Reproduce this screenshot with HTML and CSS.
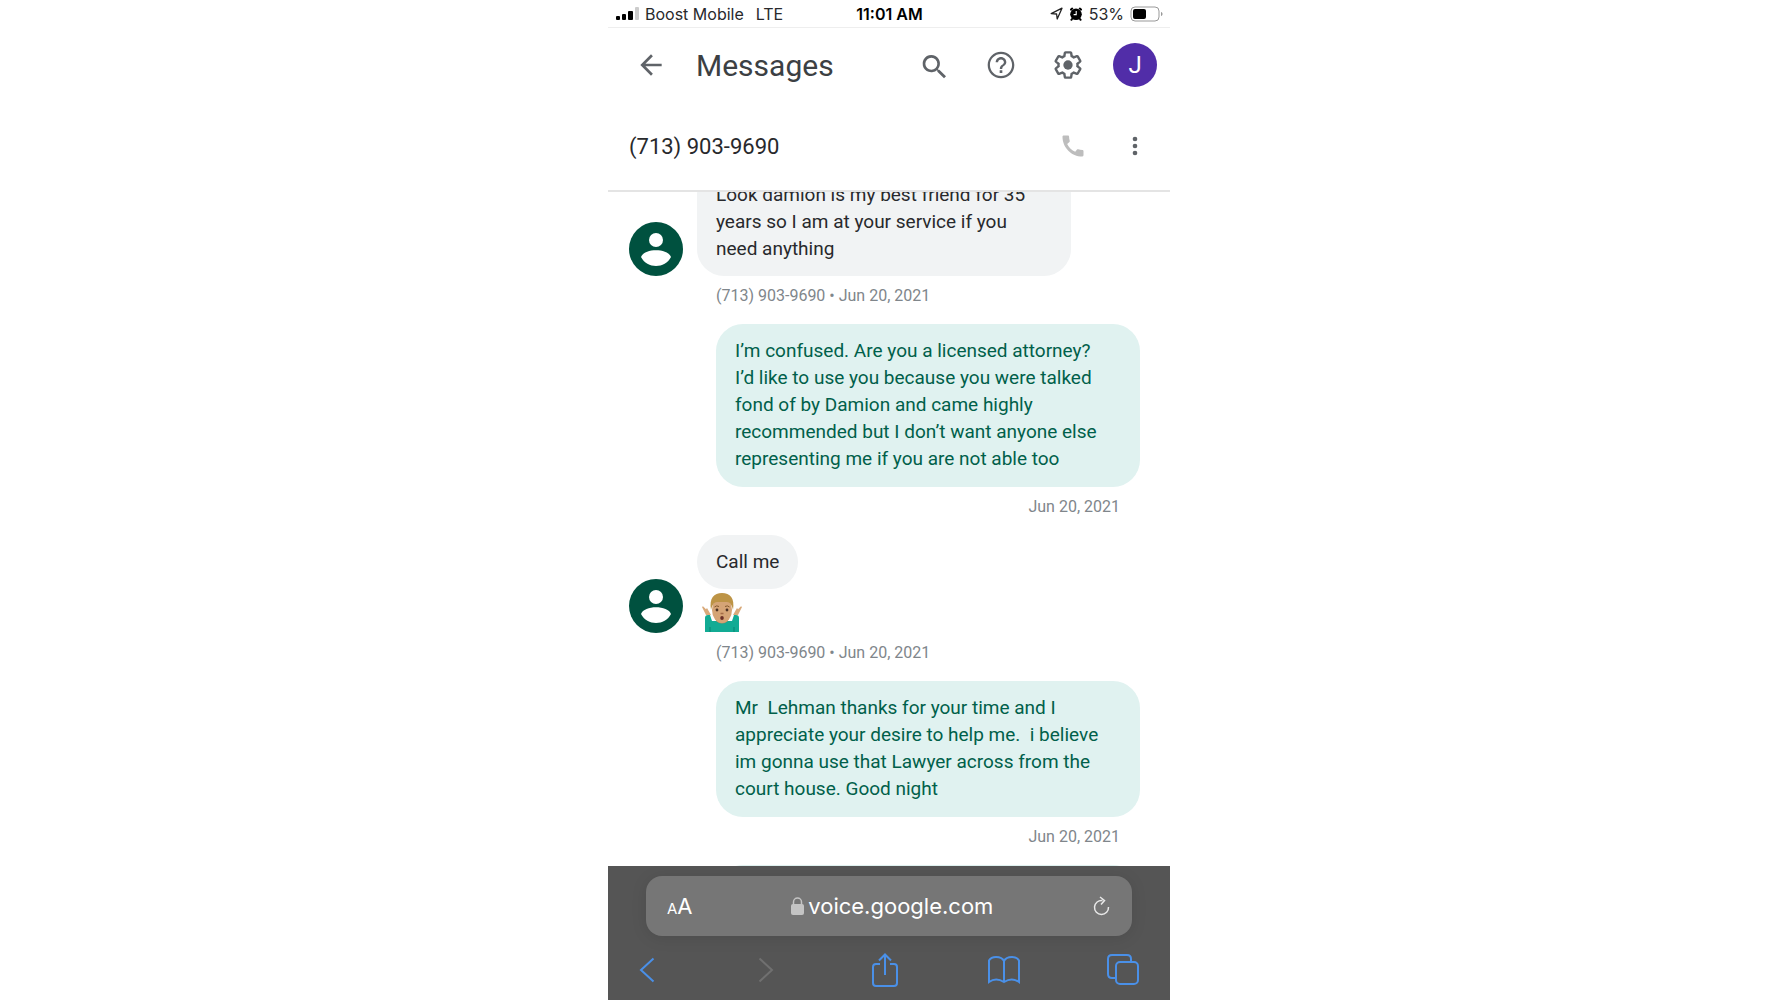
FILE: index.html
```html
<!DOCTYPE html>
<html lang="en">
<head>
    <meta charset="UTF-8">
    <meta name="viewport" content="width=device-width, initial-scale=1.0">
    <title>Messages</title>
    <link rel="stylesheet" href="styles.css">
</head>
<body>
    <div class="phone">
        <!-- Status bar -->
        <div class="status">
            <div class="status-left">
                <svg width="23" height="14" viewBox="0 0 23 14">
                    <rect x="0" y="9" width="4" height="4" rx="1"/>
                    <rect x="6" y="7" width="4" height="6" rx="1"/>
                    <rect x="12" y="4" width="5" height="9" rx="1"/>
                    <rect x="19" y="0" width="4" height="13" rx="1" fill="#ccc"/>
                </svg>
                <span>Boost Mobile</span>
                <span class="network">LTE</span>
            </div>
            <div class="status-time">11:01 AM</div>
            <div class="status-right">
                <svg width="13" height="13" viewBox="0 0 13 13">
                    <path d="M1.2 6.6 12 1.2 7.2 12 6.6 7z" fill="none" stroke="#222" stroke-width="1.3" stroke-linejoin="round"/>
                </svg>
                <svg class="alarm" width="14" height="14" viewBox="0 0 14 14">
                    <circle cx="7" cy="7.3" r="5.8"/>
                    <path d="M2 2.600 3.200 1.600M12 2.600l-1.200-1M3 12l-.6.8M11 12l.6.8" stroke="#000" stroke-width="2" stroke-linecap="round"/>
                    <path d="M7.2 4v3.6H4.6" fill="none" stroke="#fff" stroke-width="1.1"/>
                </svg>
                <span>53%</span>
                <svg width="33" height="16" viewBox="0 0 33 16">
                    <rect x="1" y="1" width="28" height="14" rx="4" fill="#fff" stroke="#999"/>
                    <rect x="3" y="3" width="13" height="10" rx="2"/>
                    <path d="M31 6c2 .5 2 3.500 0 4z" fill="#999"/>
                </svg>
            </div>
        </div>

        <!-- App header -->
        <header class="header">
            <button type="button" class="icon-btn" aria-label="Back">
                <svg width="32" height="32" viewBox="0 0 24 24"><path d="M20 11H7.830l5.590-5.590L12 4l-8 8 8 8 1.410-1.410L7.830 13H20z"/></svg>
            </button>
            <h1>Messages</h1>
            <button type="button" class="icon-btn" aria-label="Search">
                <svg width="32" height="32" viewBox="0 0 24 24"><path d="M16 15.500h-.8l-.3-.3A6.500 6.500 0 1 0 14.200 15.900l.3.300v.8l5 5 1.500-1.500zm-6 0a4.500 4.500 0 1 1 0-9 4.500 4.500 0 0 1 0 9z"/></svg>
            </button>
            <button type="button" class="icon-btn" aria-label="Help">
                <svg width="32" height="32" viewBox="0 0 24 24"><path d="M11 18h2v-2h-2zm1-16C6.480 2 2 6.480 2 12s4.480 10 10 10 10-4.480 10-10S17.520 2 12 2zm0 18.300c-4.600 0-8.300-3.700-8.300-8.300S7.400 3.700 12 3.700s8.300 3.700 8.300 8.300-3.700 8.300-8.300 8.300zM12 6c-2.210 0-4 1.790-4 4h1.800c0-1.200 1-2.200 2.200-2.200s2.200 1 2.200 2.200c0 2-3.100 1.750-3.100 5h1.800c0-2.250 3.100-2.500 3.100-5 0-2.210-1.790-4-4-4z"/></svg>
            </button>
            <button type="button" class="icon-btn" aria-label="Settings">
                <svg width="32" height="32" viewBox="0 0 24 24">
                    <path transform="translate(.6 .6) scale(.95)" fill="none" stroke="#5f6368" stroke-width="1.900" d="M19.430 12.980c.04-.32.07-.64.07-.98 0-.34-.03-.66-.07-.98l2.110-1.650c.19-.15.24-.42.12-.64l-2-3.460c-.09-.16-.26-.25-.44-.25-.06 0-.12.010-.17.030l-2.490 1c-.52-.4-1.080-.73-1.690-.98l-.38-2.650C14.460 2.180 14.250 2 14 2h-4c-.25 0-.46.18-.49.42l-.38 2.650c-.61.25-1.170.59-1.690.98l-2.490-1c-.06-.02-.12-.03-.18-.03-.17 0-.34.09-.43.25l-2 3.460c-.13.22-.07.49.12.64l2.110 1.650c-.04.32-.07.65-.07.98 0 .33.03.66.07.98l-2.110 1.650c-.19.15-.24.42-.12.64l2 3.460c.09.16.26.25.44.25.06 0 .12-.01.17-.03l2.490-1c.52.4 1.080.73 1.690.98l.38 2.650c.03.24.24.42.49.42h4c.25 0 .46-.18.49-.42l.38-2.650c.61-.25 1.170-.59 1.690-.98l2.490 1c.06.02.12.03.18.03.17 0 .34-.09.43-.25l2-3.460c.12-.22.07-.49-.12-.64z"/>
                    <circle cx="12" cy="12" r="3.500"/>
                </svg>
            </button>
            <button type="button" class="account" aria-label="Account">J</button>
        </header>

        <div class="contact">
            <h2>(713) 903-9690</h2>
            <button type="button" class="icon-btn call" aria-label="Call">
                <svg width="28" height="28" viewBox="0 0 24 24"><path d="M20.010 15.380c-1.230 0-2.420-.2-3.530-.56-.35-.12-.74-.03-1.010.24l-1.570 1.970c-2.830-1.350-5.480-3.900-6.890-6.830l1.950-1.660c.27-.28.35-.67.24-1.020-.37-1.110-.56-2.300-.56-3.530 0-.54-.45-.99-.99-.99H4.190C3.650 3 3 3.240 3 3.990 3 13.280 10.730 21 20.010 21c.71 0 .99-.63.99-1.180v-3.450c0-.54-.45-.99-.99-.99z"/></svg>
            </button>
            <button type="button" class="icon-btn" aria-label="More options">
                <svg width="28" height="28" viewBox="0 0 24 24"><circle cx="12" cy="6" r="2"/><circle cx="12" cy="12" r="2"/><circle cx="12" cy="18" r="2"/></svg>
            </button>
        </div>

        <!-- Conversation -->
        <main class="thread">
            <div class="row first">
                <svg class="avatar" viewBox="0 0 54 54">
                    <circle cx="27" cy="27" r="27" fill="#00513f"/>
                    <circle cx="27" cy="18" r="7" fill="#fff"/>
                    <path d="M12 35c3-9 27-9 30 0-6 12-24 12-30 0z" fill="#fff"/>
                </svg>
                <div class="bubbles">
                    <div class="bubble">Look damion is my best friend for 35 years so I am at your service if you need anything</div>
                </div>
            </div>
            <div class="meta">(713) 903-9690 • Jun 20, 2021</div>

            <div class="bubble sent">I’m confused. Are you a licensed attorney? I’d like to use you because you were talked fond of by Damion and came highly recommended but I don’t want anyone else representing me if you are not able too</div>
            <div class="meta meta-sent">Jun 20, 2021</div>

            <div class="row">
                <svg class="avatar" viewBox="0 0 54 54">
                    <circle cx="27" cy="27" r="27" fill="#00513f"/>
                    <circle cx="27" cy="18" r="7" fill="#fff"/>
                    <path d="M12 35c3-9 27-9 30 0-6 12-24 12-30 0z" fill="#fff"/>
                </svg>
                <div class="bubbles">
                    <div class="bubble">Call me</div>
                    <svg class="shrug" width="40" height="40" viewBox="0 0 40 40" role="img" aria-label="Man shrugging">
                        <path d="M3 39V25q0-3 3-3h2l2 6 5 0h10l5 0 2-6h2q3 0 3 3v14z" fill="#12ab94"/>
                        <path d="M8 39v-5M32 39v-5" stroke="#078571"/>
                        <path d="M4 22 0 14l1-.8 3 3 1-1.200 4 7zM36 22l4-8-1-.8-3 3-1-1.200-4 7z" fill="#d9aa7b"/>
                        <path d="M14 26h12v2q-6 5-12 0z" fill="#b88b5e"/>
                        <ellipse cx="20" cy="17" rx="10" ry="13" fill="#d5a476"/>
                        <path d="M9 17C7 5 12 0 20 0s13 5 11 17c-1-5-3-8-6-8H15c-3 0-5 3-6 8z" fill="#bd9446"/>
                        <path d="M12.500 14q2-2 4.500-.5M23 13.500q2.500-1.500 4.500.5" fill="none" stroke="#83582c"/>
                        <circle cx="15" cy="17" r="1.400" fill="#4c3124"/>
                        <circle cx="25" cy="17" r="1.400" fill="#4c3124"/>
                        <path d="M18.500 20.500h3" stroke="#a46d48" stroke-width="1.500"/>
                        <ellipse cx="20" cy="25" rx="1.800" ry="2" fill="#6b2f27"/>
                    </svg>
                </div>
            </div>
            <div class="meta">(713) 903-9690 • Jun 20, 2021</div>

            <div class="bubble sent">Mr&nbsp; Lehman thanks for your time and I appreciate your desire to help me.&nbsp; i believe im gonna use that Lawyer across from the court house. Good night</div>
            <div class="meta meta-sent">Jun 20, 2021</div>
            <div class="bubble sent next"></div>
        </main>

        <!-- Browser bar -->
        <footer class="browser">
            <div class="address">
                <button type="button" class="text-size" aria-label="Text size"><small>A</small>A</button>
                <label class="url">
                    <svg width="13" height="18" viewBox="0 0 13 18">
                        <rect x="0" y="7" width="13" height="11" rx="2" fill="#c4c4c4"/>
                        <path d="M2.500 8V5a4 4 0 0 1 8 0v3" fill="none" stroke="#c4c4c4" stroke-width="1.500"/>
                    </svg>
                    <input type="text" value="voice.google.com" aria-label="Address">
                </label>
                <button type="button" aria-label="Reload">
                    <svg width="18" height="20" viewBox="0 0 18 20" fill="none" stroke="#e8e8e8" stroke-width="1.500">
                        <path d="M9.500 4.500A7 7 0 1 0 15.500 11M7 1l4.500 3.500L8 8.500"/>
                    </svg>
                </button>
            </div>
            <nav class="tools">
                <button type="button" aria-label="Previous page">
                    <svg width="16" height="26" viewBox="0 0 16 26"><path d="M14.500 1.500 2 13l12.500 11.500"/></svg>
                </button>
                <button type="button" aria-label="Next page" disabled>
                    <svg width="16" height="26" viewBox="0 0 16 26"><path d="m1.500 1.500 12.500 11.500L1.500 24.500"/></svg>
                </button>
                <button type="button" aria-label="Share">
                    <svg width="28" height="34" viewBox="0 0 28 34"><path d="M9 11H5q-3 0-3 3v16q0 3 3 3h18q3 0 3-3V14q0-3-3-3h-4M14 22V2M8 7.500 14 1.500l6 6"/></svg>
                </button>
                <button type="button" aria-label="Bookmarks">
                    <svg width="34" height="28" viewBox="0 0 34 28"><path d="M17 5Q15 1 9 1 4 1 2 4.500V26q7-5 15 0 8-5 15 0V4.500Q30 1 25 1q-6 0-8 4zv21"/></svg>
                </button>
                <button type="button" aria-label="Tabs">
                    <svg width="32" height="32" viewBox="0 0 32 32"><path d="M8 24H5q-4 0-4-4V5q0-4 4-4h15q4 0 4 4v3"/><rect x="9" y="8" width="22" height="22" rx="4"/></svg>
                </button>
            </nav>
        </footer>
    </div>
</body>
</html>
```
FILE: styles.css
```css
* {
    box-sizing: border-box;
}

body {
    margin: 0;
    background: #fff;
    color: #28292c;
    font-family: Roboto, "Liberation Sans", sans-serif;
}

h1, h2 {
    margin: 0;
    font-weight: 400;
}

button {
    padding: 0;
    border: none;
    background: none;
    color: inherit;
    font: inherit;
    cursor: pointer;
}

svg {
    display: block;
    flex: none;
}

.phone {
    display: flex;
    flex-direction: column;
    max-width: 562px;
    height: 100vh;
    margin: 0 auto;
}

/* Status bar */
.status {
    display: grid;
    grid-template-columns: 1fr auto 1fr;
    align-items: center;
    height: 28px;
    padding: 0 7px 0 8px;
    border-bottom: 1px solid #eee;
    font-family: Inter, sans-serif;
    font-size: 16px;
}

.status-left, .status-right {
    display: flex;
    align-items: center;
    gap: 6px;
}

.status-right {
    justify-content: flex-end;
}

.network {
    margin-left: 6px;
}

.status-time {
    color: #000;
    font-weight: 600;
}

/* Header */
.header {
    display: flex;
    align-items: center;
    gap: 23px;
    height: 74px;
    padding: 0 13px 0 21px;
}

.header h1 {
    flex: 1;
    color: #3c4043;
    font-size: 30px;
}

.icon-btn {
    display: flex;
    align-items: center;
    justify-content: center;
    width: 44px;
    height: 44px;
    fill: #5f6368;
}

.account {
    width: 44px;
    height: 44px;
    border-radius: 50%;
    background: #512da8;
    color: #fff;
    font-size: 24px;
}

.contact {
    display: flex;
    align-items: center;
    gap: 18px;
    height: 90px;
    padding: 0 13px 0 21px;
    border-bottom: 2px solid #e4e4e4;
}

.contact h2 {
    flex: 1;
    font-size: 22px;
}

.call {
    fill: #bdbdbd;
}

/* Conversation */
.thread {
    display: flex;
    flex: 1;
    flex-direction: column;
    min-height: 0;
    overflow: hidden;
    padding: 0 30px 0 21px;
}

.thread > * {
    flex: none;
}

.row {
    display: flex;
    align-items: flex-end;
    gap: 14px;
}

/* The oldest message is scrolled partly under the header */
.first {
    margin-top: -24px;
}

.avatar {
    width: 54px;
    height: 54px;
}

.bubbles {
    display: flex;
    flex-direction: column;
    align-items: flex-start;
    gap: 4px;
    max-width: 374px;
}

.shrug {
    margin-left: 5px;
}

.bubble {
    padding: 13px 19px 14px;
    border-radius: 27px;
    background: #f1f3f4;
    font-size: 19px;
    line-height: 27px;
}

.sent {
    align-self: flex-end;
    width: 424px;
    padding: 13px 32px 15px 19px;
    background: #e0f2f0;
    color: #00604a;
}

.meta {
    margin: 10px 0 18px;
    padding-left: 87px;
    color: #80868b;
    font-size: 16px;
    line-height: 20px;
}

.meta-sent {
    padding: 0 20px;
    text-align: right;
}

.next {
    min-height: 54px;
}

/* Browser bar */
.browser {
    height: 134px;
    padding: 10px 30px 0 38px;
    background: #555;
}

.address {
    display: flex;
    align-items: center;
    justify-content: space-between;
    height: 60px;
    margin-right: 8px;
    padding: 0 21px;
    border-radius: 16px;
    background: #767676;
    box-shadow: 0 2px 16px rgba(0, 0, 0, 0.1);
    color: #fff;
    font-family: Inter, sans-serif;
    font-size: 22px;
}

.text-size small {
    font-size: 15px;
}

.url {
    display: flex;
    align-items: center;
    gap: 4px;
}

.url input {
    width: 186px;
    padding: 0;
    border: none;
    outline: none;
    background: none;
    color: inherit;
    font: inherit;
}

.tools {
    display: flex;
    align-items: center;
    justify-content: space-between;
    height: 68px;
    margin-left: -16px;
}

.tools button {
    display: flex;
    justify-content: center;
    width: 34px;
}

.tools svg {
    fill: none;
    stroke: #4a90e8;
    stroke-width: 2;
}

.tools button:disabled svg {
    stroke: #707070;
}
```
